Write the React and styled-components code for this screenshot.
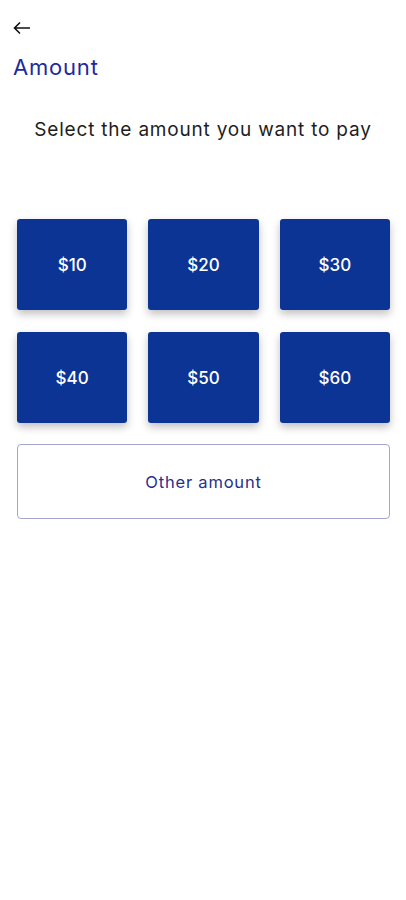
import React from "react";
import styled, { createGlobalStyle } from "styled-components";

const GlobalStyle = createGlobalStyle`
  body {
    margin: 0;
    background: #ffffff;
    font-family: Inter, Roboto, "Liberation Sans", sans-serif;
  }
`;

// 전체 화면
const Screen = styled.div`
  width: 406px;
  min-height: 900px;
  background: #ffffff;
  display: flex;
  flex-direction: column;
`;

// 상단 바
const Header = styled.div`
  padding: 18px 12px 0 12px;
  display: flex;
  flex-direction: column;
`;

const BackButton = styled.button`
  border: none;
  background: none;
  padding: 0;
  width: 20px;
  height: 20px;
  display: flex;
  align-items: center;
  color: #111;
  cursor: pointer;
`;

const Title = styled.h1`
  margin: 16px 0 0 1px;
  font-size: 22px;
  font-weight: 400;
  color: #1d2a9e;
  letter-spacing: 0.8px;
`;

const Subtitle = styled.p`
  margin: 38px 0 0;
  text-align: center;
  font-size: 19px;
  color: #1e1e1e;
  letter-spacing: 0.8px;
`;

// 금액 버튼 그리드
const Grid = styled.div`
  display: grid;
  grid-template-columns: repeat(3, 1fr);
  column-gap: 21px;
  row-gap: 22px;
  padding: 0 16px 0 17px;
  margin-top: 78px;
`;

const AmountButton = styled.button`
  height: 91px;
  border: none;
  border-radius: 3px;
  background: #0c3494;
  color: #ffffff;
  font-family: Inter, Roboto, "Liberation Sans", sans-serif;
  font-size: 17px;
  font-weight: 500;
  box-shadow: 0 4px 8px rgba(0, 0, 0, 0.25);
  cursor: pointer;
`;

const OtherButton = styled.button`
  margin: 21px 16px 0 17px;
  height: 75px;
  border: 1px solid #a6a6cc;
  border-radius: 4px;
  background: #ffffff;
  color: #27308a;
  font-family: Inter, Roboto, "Liberation Sans", sans-serif;
  font-size: 16.5px;
  font-weight: 400;
  letter-spacing: 0.8px;
  cursor: pointer;
`;

const amounts = [10, 20, 30, 40, 50, 60];

const ArrowIcon = () => (
  <svg width="20" height="14" viewBox="0 0 20 14" fill="none">
    <path d="M18 7H2.5M8 1.5L2.5 7L8 12.5" stroke="currentColor" strokeWidth="1.6" />
  </svg>
);

export default function App() {
  return (
    <Screen>
      <GlobalStyle />
      <Header>
        <BackButton aria-label="Back">
          <ArrowIcon />
        </BackButton>
        <Title>Amount</Title>
      </Header>
      <Subtitle>Select the amount you want to pay</Subtitle>
      <Grid>
        {amounts.map((a) => (
          <AmountButton key={a}>${a}</AmountButton>
        ))}
      </Grid>
      <OtherButton>Other amount</OtherButton>
    </Screen>
  );
}
